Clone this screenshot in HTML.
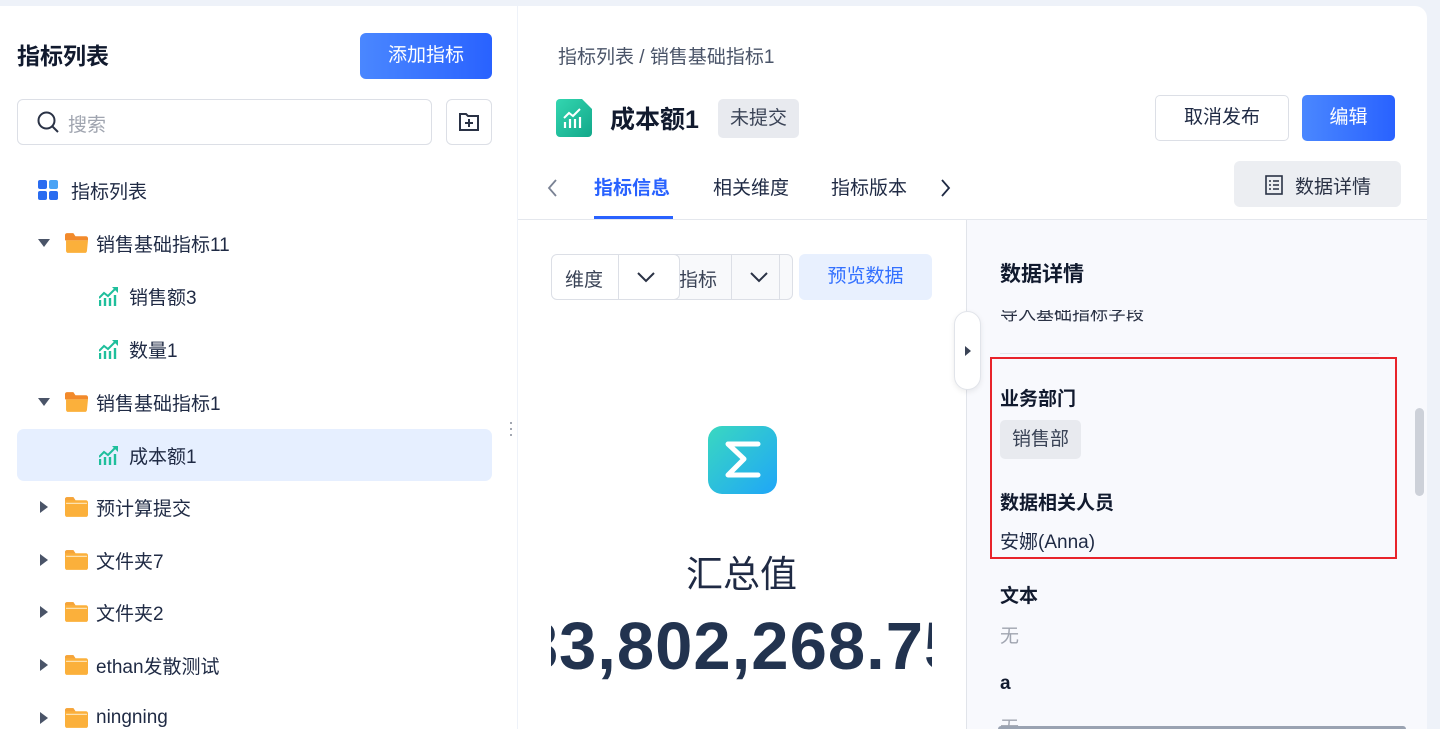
<!DOCTYPE html>
<html><head><meta charset="utf-8"><style>
*{box-sizing:border-box;margin:0;padding:0}
html,body{width:1440px;height:729px;overflow:hidden}
body{background:#eef2f9;font-family:"Liberation Sans","Noto Sans CJK SC",sans-serif;color:#1f2a44;position:relative}
.abs{position:absolute}
.left{left:0;top:6px;width:517px;height:723px;background:#fff}
.main{left:518px;top:6px;width:909px;height:723px;background:#fff;border-top-right-radius:12px}
.row{position:absolute;left:17px;width:475px;height:52px;font-size:19px;display:flex;align-items:center}
.tri{width:0;height:0;position:absolute}
.tri.d{left:21px;border-left:6px solid transparent;border-right:6px solid transparent;border-top:8px solid #4a5468}
.tri.r{left:23px;border-top:6px solid transparent;border-bottom:6px solid transparent;border-left:8px solid #4a5468}
.fold{position:absolute;left:48px;width:23px;height:20px}
.lbl{position:absolute}
</style></head><body>
<div class="abs left">
  <div class="abs" style="left:17px;top:31px;font-size:23px;font-weight:bold;color:#111a2e">指标列表</div>
  <div class="abs" style="left:360px;top:27px;width:132px;height:46px;border-radius:6px;background:linear-gradient(90deg,#4a87ff,#2962ff);color:#fff;font-size:19px;text-align:center;line-height:46px">添加指标</div>
  <div class="abs" style="left:17px;top:93px;width:415px;height:46px;border:1px solid #dcdfe6;border-radius:6px">
    <svg class="abs" style="left:18px;top:10px" width="24" height="24" viewBox="0 0 24 24"><circle cx="10.5" cy="10.5" r="8" fill="none" stroke="#2a3245" stroke-width="2"/><path d="M16.5 16.5L22 22" stroke="#2a3245" stroke-width="2"/></svg>
    <span class="abs" style="left:50px;top:10px;font-size:19px;color:#a0a5b0">搜索</span>
  </div>
  <div class="abs" style="left:446px;top:93px;width:46px;height:46px;border:1px solid #dcdfe6;border-radius:6px">
    <svg class="abs" style="left:11px;top:11px" width="22" height="22" viewBox="0 0 22 22"><path d="M2 3h6l2 2h10v14H2z" fill="none" stroke="#2a3245" stroke-width="2"/><path d="M11 8v8M7 12h8" stroke="#2a3245" stroke-width="2"/></svg>
  </div>
  <div class="row" style="top:158px"><svg class="abs" style="left:21px" width="21" height="21" viewBox="0 0 21 21"><rect x="0" y="0" width="9" height="9" rx="2" fill="#2a6cf0"/><rect x="11" y="0" width="9" height="9" rx="2" fill="#4aa3f5"/><rect x="0" y="11" width="9" height="9" rx="2" fill="#2a6cf0"/><rect x="11" y="11" width="9" height="9" rx="2" fill="#2a6cf0"/></svg><span class="lbl" style="left:54px">指标列表</span></div>
</div>
<div class="abs main">
  <div class="abs" style="left:40px;top:36px;font-size:19px;color:#4a5468">指标列表 / 销售基础指标1</div>
  <svg class="abs" style="left:38px;top:93px" width="36" height="38" viewBox="0 0 36 38"><defs><linearGradient id="g1" x1="0" y1="0" x2="1" y2="1"><stop offset="0" stop-color="#33d6b0"/><stop offset="1" stop-color="#12a88a"/></linearGradient></defs><path d="M4 0h22l10 10v24a4 4 0 0 1-4 4H4a4 4 0 0 1-4-4V4a4 4 0 0 1 4-4z" fill="url(#g1)"/><path d="M9 29v-6M14 29v-9M19 29v-9M24 29v-11" stroke="#fff" stroke-width="2.2"/><path d="M8 19l5-5 4 3 7-7" stroke="#fff" stroke-width="2" fill="none"/></svg>
  <div class="abs" style="left:92px;top:94px;font-size:25px;font-weight:bold;color:#111a2e">成本额1</div>
  <div class="abs" style="left:200px;top:93px;width:81px;height:39px;background:#e8eaef;border-radius:5px;font-size:19px;line-height:39px;text-align:center;color:#3a4356">未提交</div>
  <div class="abs" style="left:637px;top:89px;width:134px;height:46px;border:1px solid #dcdfe6;border-radius:5px;font-size:19px;line-height:44px;text-align:center;color:#1f2a44">取消发布</div>
  <div class="abs" style="left:784px;top:89px;width:93px;height:46px;background:linear-gradient(90deg,#4a87ff,#2962ff);border-radius:5px;font-size:19px;line-height:46px;text-align:center;color:#fff">编辑</div>
  <svg class="abs" style="left:29px;top:172px" width="12" height="20" viewBox="0 0 12 20"><path d="M9 2L2 10l7 8" fill="none" stroke="#7a8294" stroke-width="1.8"/></svg>
  <div class="abs" style="left:76px;top:167px;font-size:19px;font-weight:bold;color:#2962ff">指标信息</div>
  <div class="abs" style="left:76px;top:210px;width:79px;height:4px;background:#2962ff"></div>
  <div class="abs" style="left:195px;top:167px;font-size:19px">相关维度</div>
  <div class="abs" style="left:313px;top:167px;font-size:19px">指标版本</div>
  <svg class="abs" style="left:421px;top:172px" width="12" height="20" viewBox="0 0 12 20"><path d="M3 2l7 8-7 8" fill="none" stroke="#1f2a44" stroke-width="1.8"/></svg>
  <div class="abs" style="left:716px;top:155px;width:167px;height:46px;background:#eceef2;border-radius:6px">
    <svg class="abs" style="left:31px;top:14px" width="18" height="20" viewBox="0 0 18 20"><rect x="1" y="1" width="16" height="18" fill="none" stroke="#2a3245" stroke-width="1.6"/><path d="M4 6h2M8 6h6M4 10h2M8 10h6M4 14h2M8 14h6" stroke="#2a3245" stroke-width="1.6"/></svg>
    <span class="abs" style="left:61px;top:11px;font-size:19px;color:#2a3245">数据详情</span>
  </div>
  <div class="abs" style="left:0;top:213px;width:909px;height:1px;background:#e4e7ed"></div>
  <div class="abs" style="left:33px;top:248px;width:129px;height:46px;border:1px solid #dcdfe6;border-radius:6px;background:#fff;z-index:2">
    <span class="abs" style="left:13px;top:10px;font-size:19px;color:#3a4356">维度</span>
    <div class="abs" style="left:66px;top:0;width:1px;height:44px;background:#dcdfe6"></div>
    <svg class="abs" style="left:84px;top:15px" width="20" height="14" viewBox="0 0 20 14"><path d="M2 3l8 8 8-8" fill="none" stroke="#2a3245" stroke-width="2"/></svg>
  </div>
  <div class="abs" style="left:150px;top:248px;width:125px;height:46px;border:1px solid #dcdfe6;border-radius:6px;background:#f8f9fb">
    <span class="abs" style="left:10px;top:10px;font-size:19px;color:#3a4356">指标</span>
    <div class="abs" style="left:62px;top:0;width:1px;height:44px;background:#dcdfe6"></div>
    <svg class="abs" style="left:80px;top:15px" width="20" height="14" viewBox="0 0 20 14"><path d="M2 3l8 8 8-8" fill="none" stroke="#2a3245" stroke-width="2"/></svg>
    <div class="abs" style="left:110px;top:0;width:1px;height:44px;background:#dcdfe6"></div>
  </div>
  <div class="abs" style="left:281px;top:248px;width:133px;height:46px;background:#e8f0fe;border-radius:6px;font-size:19px;line-height:46px;text-align:center;color:#3370ff">预览数据</div>
  <svg class="abs" style="left:190px;top:420px" width="69" height="68" viewBox="0 0 69 68"><defs><linearGradient id="g2" x1="0" y1="0" x2="1" y2="1"><stop offset="0" stop-color="#3ad8c0"/><stop offset="1" stop-color="#1fa6f8"/></linearGradient></defs><rect width="69" height="68" rx="14" fill="url(#g2)"/><path d="M50 18H20l16 15-16 16h30" fill="none" stroke="#fff" stroke-width="5" stroke-linecap="round" stroke-linejoin="round"/></svg>
  <div class="abs" style="left:168px;top:538px;font-size:37px;color:#1f2a44">汇总值</div>
  <div class="abs" style="left:33px;top:602px;width:381px;height:80px;overflow:hidden">
    <div class="abs" style="left:50%;transform:translateX(-50%);top:0;font-size:67px;font-weight:bold;color:#22334f;white-space:nowrap;letter-spacing:1px">83,802,268.75</div>
  </div>
  <div class="abs" style="left:448px;top:214px;width:461px;height:509px;background:#f8f9fd;border-left:1px solid #e1e4ea;overflow:hidden">
    <div class="abs" style="left:33px;top:38px;font-size:21px;font-weight:bold;color:#111a2e">数据详情</div>
    <div class="abs" style="left:33px;top:90px;height:14px;overflow:hidden;width:300px"><div style="margin-top:-10px;font-size:18px;color:#2a3245">导入基础指标字段</div></div>
    <div class="abs" style="left:33px;top:133px;width:379px;height:1px;background:#e4e7ed"></div>
    <div class="abs" style="left:23px;top:137px;width:407px;height:202px;border:2px solid #e8232b"></div>
    <div class="abs" style="left:33px;top:164px;font-size:19px;font-weight:bold;color:#111a2e">业务部门</div>
    <div class="abs" style="left:33px;top:200px;width:81px;height:39px;background:#e8eaef;border-radius:5px;font-size:19px;line-height:39px;text-align:center;color:#3a4356">销售部</div>
    <div class="abs" style="left:33px;top:268px;font-size:19px;font-weight:bold;color:#111a2e">数据相关人员</div>
    <div class="abs" style="left:33px;top:307px;font-size:19px;color:#1f2a44">安娜(Anna)</div>
    <div class="abs" style="left:33px;top:361px;font-size:19px;font-weight:bold;color:#111a2e">文本</div>
    <div class="abs" style="left:33px;top:401px;font-size:19px;color:#a0a5b0">无</div>
    <div class="abs" style="left:33px;top:453px;font-size:19px;font-weight:bold;color:#111a2e">a</div>
    <div class="abs" style="left:33px;top:493px;font-size:19px;color:#a0a5b0">无</div>
    <div class="abs" style="left:448px;top:188px;width:9px;height:88px;border-radius:5px;background:#cdd1d9"></div>
    <div class="abs" style="left:31px;top:506px;width:408px;height:6px;border-radius:3px;background:#9aa3b2"></div>
  </div>
  <div class="abs" style="left:436px;top:305px;width:27px;height:79px;background:#fff;border:1px solid #e1e4ea;border-radius:14px;box-shadow:0 2px 6px rgba(0,0,0,.08)">
    <div class="abs" style="left:10px;top:34px;border-top:5px solid transparent;border-bottom:5px solid transparent;border-left:6px solid #3a4356"></div>
  </div>
</div>
<div class="abs" style="left:510px;top:420px;width:2px;height:16px;background:radial-gradient(circle,#9aa0ab 1px,transparent 1.2px) 0 0/2px 6px"></div>
<svg width="0" height="0" style="position:absolute"><defs><g id="ic"><path d="M1 20v-6M6 20v-8M11 20v-8M16 20v-11" stroke="#1fbf9c" stroke-width="2.4"/><path d="M0 12l5-5 4 3 7-7" stroke="#1fbf9c" stroke-width="2" fill="none"/><path d="M13 1h6v6z" fill="#1fbf9c"/></g>
<g id="fo"><path d="M0 2a2 2 0 0 1 2-2h6l2 3h10a2 2 0 0 1 2 2v2H0z" fill="#f28a2b"/><path d="M1 7h21l-1 10a2 2 0 0 1-2 2H3a2 2 0 0 1-2-2z" fill="#fbb03b"/></g>
<g id="fc"><path d="M0 2a2 2 0 0 1 2-2h6l2 3h10a2 2 0 0 1 2 2v12a2 2 0 0 1-2 2H2a2 2 0 0 1-2-2z" fill="#fbb03b"/><path d="M0 2a2 2 0 0 1 2-2h6l2 3H0z" fill="#f5a43a"/><path d="M1 6h20" stroke="#fde2b0" stroke-width="1.2"/></g></defs></svg>
<div class="row" style="top:217px"><div class="tri d"></div><svg class="fold" style="top:16px" viewBox="0 0 22 19"><use href="#fo"/></svg><span class="lbl" style="left:79px">销售基础指标11</span></div>
<div class="row" style="top:270px"><svg class="abs" style="left:82px" width="20" height="21" viewBox="0 0 20 21"><use href="#ic"/></svg><span class="lbl" style="left:112px">销售额3</span></div>
<div class="row" style="top:323px"><svg class="abs" style="left:82px" width="20" height="21" viewBox="0 0 20 21"><use href="#ic"/></svg><span class="lbl" style="left:112px">数量1</span></div>
<div class="row" style="top:376px"><div class="tri d"></div><svg class="fold" style="top:16px" viewBox="0 0 22 19"><use href="#fo"/></svg><span class="lbl" style="left:79px">销售基础指标1</span></div>
<div class="row" style="top:429px;background:#e6efff;border-radius:7px"><svg class="abs" style="left:82px" width="20" height="21" viewBox="0 0 20 21"><use href="#ic"/></svg><span class="lbl" style="left:112px">成本额1</span></div>
<div class="row" style="top:481px"><div class="tri r"></div><svg class="fold" style="top:16px" viewBox="0 0 22 19"><use href="#fc"/></svg><span class="lbl" style="left:79px">预计算提交</span></div>
<div class="row" style="top:534px"><div class="tri r"></div><svg class="fold" style="top:16px" viewBox="0 0 22 19"><use href="#fc"/></svg><span class="lbl" style="left:79px">文件夹7</span></div>
<div class="row" style="top:586px"><div class="tri r"></div><svg class="fold" style="top:16px" viewBox="0 0 22 19"><use href="#fc"/></svg><span class="lbl" style="left:79px">文件夹2</span></div>
<div class="row" style="top:639px"><div class="tri r"></div><svg class="fold" style="top:16px" viewBox="0 0 22 19"><use href="#fc"/></svg><span class="lbl" style="left:79px">ethan发散测试</span></div>
<div class="row" style="top:692px"><div class="tri r"></div><svg class="fold" style="top:16px" viewBox="0 0 22 19"><use href="#fc"/></svg><span class="lbl" style="left:79px">ningning</span></div>
</body></html>
